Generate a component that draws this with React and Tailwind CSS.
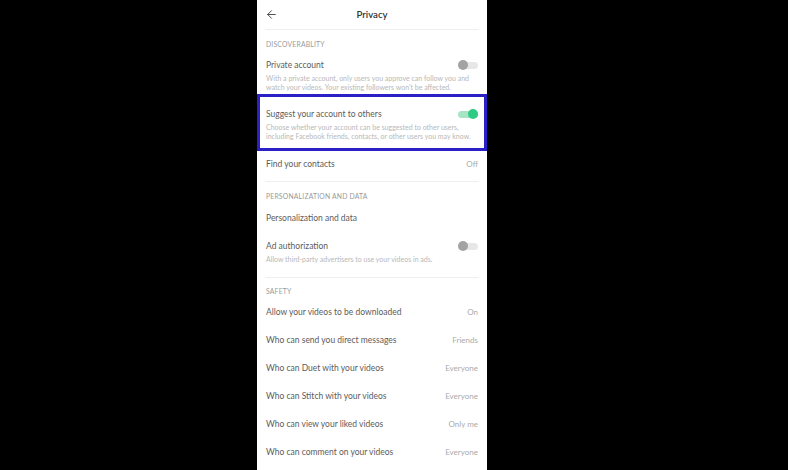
import React from "react";
import { ArrowLeft } from "lucide-react";

const safety = [
  { label: "Allow your videos to be downloaded", value: "On" },
  { label: "Who can send you direct messages", value: "Friends" },
  { label: "Who can Duet with your videos", value: "Everyone" },
  { label: "Who can Stitch with your videos", value: "Everyone" },
  { label: "Who can view your liked videos", value: "Only me" },
  { label: "Who can comment on your videos", value: "Everyone" },
];

const Toggle = ({ on }) => (
  <div className="relative w-[20px] h-[10px] flex items-center">
    <div className={`w-full h-[7px] rounded-full ${on ? "bg-[#a6e4c4]" : "bg-[#e7e7e7]"}`} />
    <div
      className={`absolute top-0 w-[10px] h-[10px] rounded-full ${
        on ? "right-0 bg-[#2fcb85]" : "left-0 bg-[#a3a3a3]"
      }`}
    />
  </div>
);

const SectionLabel = ({ children }) => (
  <div className="h-[28px] flex items-center px-[9px] text-[6.8px] leading-[10px] tracking-[0.2px] text-[#9a9a9a] uppercase">
    {children}
  </div>
);

const Divider = () => <div className="h-px bg-[#efefef] mx-[8px]" />;

export default function App() {
  return (
    <div
      className="w-full h-[470px] bg-black flex pl-[257px] overflow-hidden leading-[10px]"
      style={{ fontFamily: "Lato, 'Liberation Sans', sans-serif" }}
    >
      <div className="w-[230px] h-full bg-white flex flex-col">
        {/* header */}
        <div className="h-[29px] relative flex items-center justify-center">
          <ArrowLeft size={13} strokeWidth={1.6} className="absolute left-[8px] text-[#333]" />
          <span className="text-[9.6px] font-semibold text-[#333]">Privacy</span>
        </div>
        <Divider />

        <SectionLabel>Discoverablity</SectionLabel>

        <div className="h-[36px] px-[9px] pt-[2px]">
          <div className="flex items-center justify-between h-[10px]">
            <span className="text-[8.5px] leading-[10px] text-[#5c5c5c]">Private account</span>
            <Toggle on={false} />
          </div>
          <p className="mt-[4px] text-[7px] leading-[9px] text-[#b8b8b8]">
            With a private account, only users you approve can follow you and watch your videos. Your existing followers won't be affected.
          </p>
        </div>

        <div className="h-[57px] border-[3px] border-[#2b1fc6] px-[6px] pt-[12px]">
          <div className="flex items-center justify-between h-[10px]">
            <span className="text-[8.5px] leading-[10px] text-[#5c5c5c]">Suggest your account to others</span>
            <Toggle on />
          </div>
          <p className="mt-[4px] text-[7px] leading-[9px] text-[#b8b8b8]">
            Choose whether your account can be suggested to other users, including Facebook friends, contacts, or other users you may know.
          </p>
        </div>

        <div className="h-[30px] pb-[4px] px-[9px] flex items-center justify-between">
          <span className="text-[8.5px] leading-[10px] text-[#5c5c5c]">Find your contacts</span>
          <span className="text-[8px] leading-[10px] text-[#aaa]">Off</span>
        </div>
        <Divider />

        <SectionLabel>Personalization and data</SectionLabel>

        <div className="h-[24px] pt-[3px] px-[9px] flex items-start">
          <span className="text-[8.5px] leading-[10px] text-[#5c5c5c]">Personalization and data</span>
        </div>

        <div className="h-[43px] pt-[7px] px-[9px]">
          <div className="flex items-center justify-between h-[10px]">
            <span className="text-[8.5px] leading-[10px] text-[#5c5c5c]">Ad authorization</span>
            <Toggle on={false} />
          </div>
          <p className="mt-[4px] text-[7px] leading-[9px] text-[#b8b8b8]">
            Allow third-party advertisers to use your videos in ads.
          </p>
        </div>
        <Divider />

        <div className="h-[20px] pt-[8px] px-[9px] text-[6.8px] leading-[10px] tracking-[0.2px] text-[#9a9a9a] uppercase">
          Safety
        </div>

        {safety.map((row) => (
          <div key={row.label} className="h-[28px] shrink-0 px-[9px] flex items-center justify-between">
            <span className="text-[8.5px] leading-[10px] text-[#5c5c5c]">{row.label}</span>
            <span className="text-[8px] leading-[10px] text-[#aaa]">{row.value}</span>
          </div>
        ))}
      </div>
    </div>
  );
}
